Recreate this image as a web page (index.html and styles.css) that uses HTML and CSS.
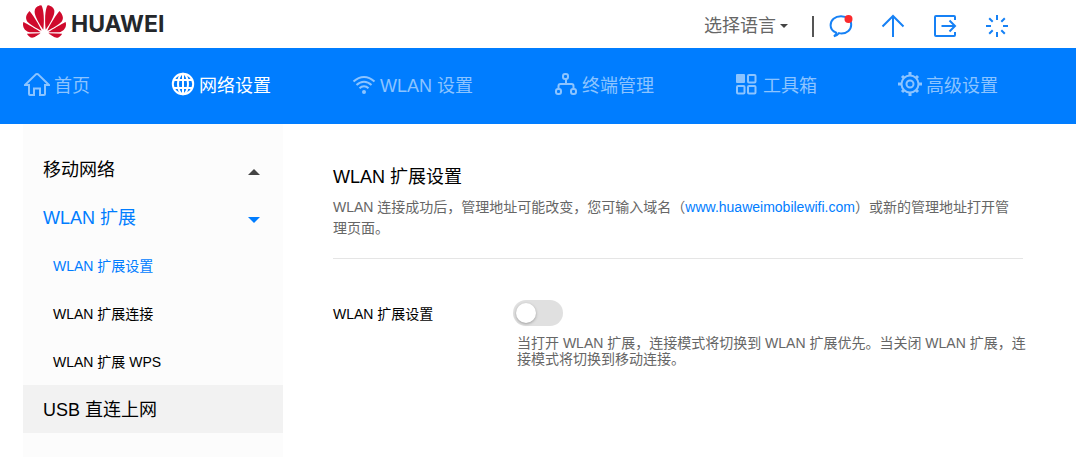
FILE: index.html
```html
<!DOCTYPE html>
<html lang="zh-CN">
<head>
<meta charset="utf-8">
<title>WLAN 扩展设置</title>
<link rel="stylesheet" href="styles.css">
</head>
<body>
<header class="topbar">
  <a class="brand" href="#">
    <svg class="brand-mark" viewBox="0 3 24 18" aria-hidden="true"><path d="M3.67 6.14S1.82 7.91 1.72 9.78v.35c.08 1.51 1.22 2.4 1.22 2.4 1.83 1.79 6.26 4.04 7.3 4.55 0 0 .06.03.1-.01l.02-.04v-.04C7.52 10.8 3.67 6.14 3.67 6.14zM9.65 18.6c-.02-.08-.1-.08-.1-.08l-7.38.26c.8 1.43 2.15 2.53 3.56 2.2.96-.25 3.16-1.78 3.88-2.3.06-.05.04-.09.04-.09zm.08-.78C6.49 15.63.21 12.28.21 12.28c-.15.46-.2.9-.21 1.3v.07c0 1.07.4 1.82.4 1.82.8 1.69 2.34 2.2 2.34 2.2.7.3 1.4.31 1.4.31.12.02 4.4 0 5.54 0 .05 0 .08-.05.08-.05v-.06c0-.03-.03-.05-.03-.05zM9.06 3.19a3.42 3.42 0 00-2.57 3.15v.41c.03.6.16 1.05.16 1.05.66 2.9 3.86 7.65 4.55 8.65.05.05.1.03.1.03a.1.1 0 00.06-.1c1.06-10.6-1.11-13.42-1.11-13.42-.32.02-1.19.23-1.19.23zm8.299 2.27s-.49-1.8-2.44-2.28c0 0-.57-.14-1.17-.22 0 0-2.18 2.81-1.12 13.43.01.07.06.08.06.08.07.03.1-.03.1-.03.72-1.03 3.9-5.76 4.55-8.64 0 0 .36-1.4.02-2.34zm-2.92 13.07s-.07 0-.09.05c0 0-.01.07.03.1.7.51 2.85 2 3.88 2.3 0 0 .16.05.43.06h.14c.69-.02 1.9-.37 3-2.26l-7.4-.25zm7.83-8.41c.14-2.06-1.94-3.97-1.94-3.98 0 0-3.85 4.66-6.67 10.8 0 0-.03.08.02.13l.04.01h.06c1.06-.53 5.46-2.77 7.28-4.54 0 0 1.15-.93 1.21-2.42zm1.52 2.14s-6.28 3.37-9.52 5.55c0 0-.05.04-.03.11 0 0 .03.06.07.06 1.16 0 5.56 0 5.67-.02 0 0 .57-.02 1.27-.29 0 0 1.56-.5 2.37-2.27 0 0 .73-1.45.17-3.14z"/></svg>
    <span class="brand-name">HUAWEI</span>
  </a>
  <div class="tools">
    <div class="language">
      <select class="language-select" aria-label="选择语言"><option>选择语言</option></select>
      <svg class="caret" viewBox="0 0 8 4" aria-hidden="true"><path d="M0 0h8L4 4z"/></svg>
    </div>
    <span class="divider"></span>
    <button class="tool" type="button" aria-label="消息">
      <svg viewBox="0 0 24 24"><path d="M7.200 18.600C3.800 17.300 1.600 14.800 1.600 11.200 1.600 5.800 6 2.200 12 2.200S22.200 5.800 22.200 10.700s-4.200 8.700-9.700 8.700c-1 0-1.700-.1-2.500-.3-1.200 1.500-2.600 2.700-5 3.300 1.500-1.200 2-2.200 2.200-3.800z"/><circle class="dot" cx="19.500" cy="5" r="4"/></svg>
    </button>
    <button class="tool" type="button" aria-label="更新">
      <svg viewBox="0 0 24 24"><path d="M12 23V2M1.500 12.500 12 2l10.500 10.500"/></svg>
    </button>
    <button class="tool" type="button" aria-label="退出">
      <svg viewBox="0 0 24 24"><path d="M22 6V3q0-1-1-1H3Q2 2 2 3v18q0 1 1 1h18q1 0 1-1v-3M8.500 12H22M16.500 6.500 22 12l-5.500 5.500"/></svg>
    </button>
    <button class="tool" type="button" aria-label="加载">
      <svg viewBox="0 0 24 24"><path d="M12 1v5M12 18v5M1 12h5M18 12h5M4.200 4.200 7.700 7.700M16.300 16.300l3.500 3.500M4.200 19.800l3.500-3.500M16.300 7.700l3.500-3.500"/></svg>
    </button>
  </div>
</header>
<nav class="mainnav">
  <a href="#" class="nav-item"><svg class="wide" viewBox="0 0 26 24"><path d="M1 13 11.600 2.600q1.400-1.300 2.800 0L25 13h-4v9q0 1-1 1h-4v-6.500h-6V23H6q-1 0-1-1v-9z"/></svg>首页</a>
  <a href="#" class="nav-item active"><svg viewBox="0 0 24 24"><circle cx="12" cy="12" r="10.200"/><ellipse cx="12" cy="12" rx="5" ry="10.200"/><path d="M12 2v20M3 8h18M3 16h18"/></svg>网络设置</a>
  <a href="#" class="nav-item"><svg viewBox="0 0 24 24"><path d="M1.500 9.500Q6.500 5 12 5t10.500 4.500M4.500 13q3.500-3.300 7.500-3.300t7.500 3.300M7.500 16.300q2-2 4.500-2t4.500 2"/><circle class="fill" cx="12" cy="20" r="2"/></svg>WLAN 设置</a>
  <a href="#" class="nav-item"><svg viewBox="0 0 24 24"><rect x="9" y="2" width="5" height="5" rx="2"/><rect x="2" y="17" width="5" height="5" rx="2"/><rect x="17" y="17" width="5" height="5" rx="2"/><path d="M12 7v5M4.500 17v-3q0-2 2-2h11q2 0 2 2v3"/></svg>终端管理</a>
  <a href="#" class="nav-item"><svg viewBox="0 0 24 24"><rect class="fill" x="1" y="2" width="9" height="9" rx="1"/><rect x="13" y="3" width="7.500" height="7.500" rx="1"/><rect x="2" y="14" width="7.500" height="7.500" rx="1"/><rect x="13" y="14" width="7.500" height="7.500" rx="1"/></svg>工具箱</a>
  <a href="#" class="nav-item"><svg viewBox="0 0 24 24"><circle cx="12" cy="12" r="8.500"/><circle cx="12" cy="12" r="3.500"/><path class="teeth" d="M12 0v3.500M12 20.500V24M0 12h3.500M20.500 12H24M4 4l2 2M18 18l2 2M4 20l2-2M18 6l2-2"/></svg>高级设置</a>
</nav>
<div class="page">
  <aside class="sidebar">
    <a href="#" class="side-item">移动网络<svg class="arrow" viewBox="0 0 12 6" aria-hidden="true"><path d="M0 6h12L6 0z"/></svg></a>
    <a href="#" class="side-item current">WLAN 扩展<svg class="arrow" viewBox="0 0 12 6" aria-hidden="true"><path d="M0 0h12L6 6z"/></svg></a>
    <a href="#" class="side-item sub current">WLAN 扩展设置</a>
    <a href="#" class="side-item sub">WLAN 扩展连接</a>
    <a href="#" class="side-item sub">WLAN 扩展 WPS</a>
    <a href="#" class="side-item hover">USB 直连上网</a>
  </aside>
  <main class="content">
    <h1 class="title">WLAN 扩展设置</h1>
    <p class="intro">WLAN 连接成功后，管理地址可能改变，您可输入域名（<a href="#">www.huaweimobilewifi.com</a>）或新的管理地址打开管理页面。</p>
    <div class="setting">
      <label class="setting-label" for="wlan-ext">WLAN 扩展设置</label>
      <div class="setting-control">
        <input class="switch" type="checkbox" id="wlan-ext">
        <p class="hint">当打开 WLAN 扩展，连接模式将切换到 WLAN 扩展优先。当关闭 WLAN 扩展，连接模式将切换到移动连接。</p>
      </div>
    </div>
  </main>
</div>
</body>
</html>
```
FILE: styles.css
```css
* {
  box-sizing: border-box;
}

body {
  margin: 0;
  min-height: 100vh;
  display: flex;
  flex-direction: column;
  background: #fff;
  color: #000;
  font-family: "Liberation Sans", "Noto Sans CJK SC", sans-serif;
  font-size: 14px;
}

a {
  color: #007dff;
  text-decoration: none;
}

.topbar {
  display: flex;
  justify-content: space-between;
  height: 48px;
  padding: 0 67px 0 23px;
}

.brand {
  display: flex;
  align-items: center;
  gap: 5px;
  padding-bottom: 6px;
  color: #24272b;
}

.brand-mark {
  width: 43px;
  height: 33px;
  fill: #cf0a2c;
}

.brand-name {
  padding-top: 6px;
  font: 700 23px/32px Inter, sans-serif;
}

.tools {
  display: flex;
  align-items: center;
  gap: 28px;
  padding-top: 4px;
}

.language {
  display: flex;
  align-items: center;
  gap: 4px;
}

.language-select {
  appearance: none;
  padding: 0;
  border: 0;
  background: none;
  color: #666;
  font: inherit;
  font-size: 18px;
}

.caret {
  width: 8px;
  height: 4px;
  fill: #444;
}

.divider {
  width: 2px;
  height: 21px;
  margin: 0 -13px 0 -4px;
  background: #555;
}

.tool {
  width: 24px;
  height: 24px;
  padding: 0;
  border: 0;
  background: none;
}

.tool svg {
  display: block;
  width: 24px;
  height: 24px;
  fill: none;
  stroke: #1681f5;
  stroke-width: 2;
}

.tool .dot {
  fill: #fa2a2d;
  stroke: none;
}

.mainnav {
  display: flex;
  justify-content: space-between;
  height: 76px;
  padding: 0 78px 5px 24px;
  background: #007dff;
}

.nav-item {
  display: flex;
  align-items: center;
  gap: 4px;
  color: #8cc4ff;
  font-size: 18px;
}

.nav-item.active {
  color: #fff;
}

.nav-item svg {
  width: 24px;
  height: 24px;
  fill: none;
  stroke: currentColor;
  stroke-width: 2;
}

.nav-item svg.wide {
  width: 26px;
}

.nav-item .fill {
  fill: currentColor;
  stroke: none;
}

.nav-item .teeth {
  stroke-width: 3;
}

.page {
  flex: 1;
  display: flex;
  gap: 50px;
  padding: 0 23px;
}

.sidebar {
  flex: 0 0 260px;
  padding-top: 21px;
  background: #fcfcfc;
}

.side-item {
  display: flex;
  align-items: center;
  justify-content: space-between;
  height: 48px;
  padding: 0 23px 2px 20px;
  color: #000;
  font-size: 18px;
}

.side-item.sub {
  padding: 0 23px 0 30px;
  font-size: 14px;
}

.side-item.current {
  color: #007dff;
}

.side-item.hover {
  background: #f2f2f2;
}

.arrow {
  width: 12px;
  height: 6px;
  margin-top: 8px;
  fill: #444;
}

.current .arrow {
  fill: #007dff;
}

.content {
  flex: 1;
  padding-top: 41px;
}

.title {
  margin: 0 0 8px;
  font-size: 18px;
  font-weight: 400;
  line-height: 24px;
}

.intro {
  margin: 0 30px 0 0;
  padding: 0 10px 19px 0;
  border-bottom: 1px solid #e5e5e5;
  color: #666;
  line-height: 21px;
}

.setting {
  display: flex;
  margin-top: 41px;
}

.setting-label {
  flex: 0 0 180px;
  line-height: 28px;
}

.setting-control {
  flex: 1;
}

.switch {
  appearance: none;
  display: block;
  width: 50px;
  height: 26px;
  margin: 0;
  padding: 3px;
  border-radius: 13px;
  background: #e0e0e0;
}

.switch::before {
  content: "";
  display: block;
  width: 20px;
  height: 20px;
  border-radius: 50%;
  background: #fff;
  box-shadow: 0 1px 3px rgba(0, 0, 0, 0.3);
}

.switch:checked {
  background: #007dff;
}

.switch:checked::before {
  margin-left: auto;
}

.hint {
  margin: 9px 0 0;
  padding: 0 20px 0 4px;
  color: #666;
  line-height: 16px;
}
```
